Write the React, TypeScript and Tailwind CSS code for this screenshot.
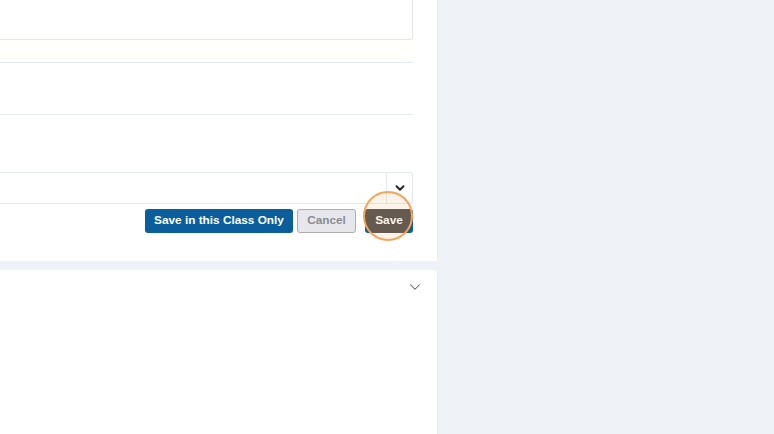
import { ChevronDown } from "lucide-react";

const App = () => {
  return (
    <div className="relative flex h-[434px] w-[774px] overflow-hidden bg-[#eff3f8] font-['Liberation_Sans',Arial,sans-serif]">
      <div className="flex w-[438px] flex-col gap-[9px]">
        {/* Edit form panel */}
        <div className="h-[261px] border-r border-[#e8ecf1] bg-white">
          <div className="flex w-[413px] flex-col">
            <div className="h-[40px] rounded-br-[3px] border-r border-b border-[#e2e5e9]"></div>
            <div className="h-[22px] bg-[#fffffb]"></div>
            <div className="h-[53px] border-t border-b border-[#e4e7eb]"></div>
            <div className="mt-[57px] flex h-[32px] rounded-r-[3px] border-y border-r border-[#e4e7eb]">
              <div className="flex-1"></div>
              <div className="flex w-[26px] items-center justify-center border-l border-[#e4e7eb]">
                <ChevronDown className="h-[14px] w-[14px] text-[#222]" strokeWidth={3.2} />
              </div>
            </div>
            <div className="mt-[5px] flex h-[24px] justify-end">
              <button className="h-full w-[148px] rounded-[3px] bg-[#0a5e9c] text-[11.8px] font-bold text-white">
                Save in this Class Only
              </button>
              <button className="ml-[4px] h-full w-[59px] rounded-[3px] border border-[#acadb3] bg-[#e7e7eb] text-[11.8px] font-bold text-[#8b8c91]">
                Cancel
              </button>
              <button className="ml-[9px] h-full w-[48px] rounded-[3px] bg-[#0a5e9c] text-[11.8px] font-bold text-white">
                Save
              </button>
            </div>
          </div>
        </div>

        {/* Collapsed section */}
        <div className="flex flex-1 justify-end rounded-tr-[4px] border-r border-[#e8ecf1] bg-white pt-[8px] pr-[13px]">
          <ChevronDown className="h-[18px] w-[18px] text-[#5a5d63]" strokeWidth={1.4} />
        </div>
      </div>

      {/* Click highlight */}
      <div className="absolute top-[191px] left-[363px] h-[50px] w-[50px] rounded-full border-2 border-[#f5a45c] bg-[#f39a4a]/12 backdrop-grayscale"></div>
    </div>
  );
};

export default App;
